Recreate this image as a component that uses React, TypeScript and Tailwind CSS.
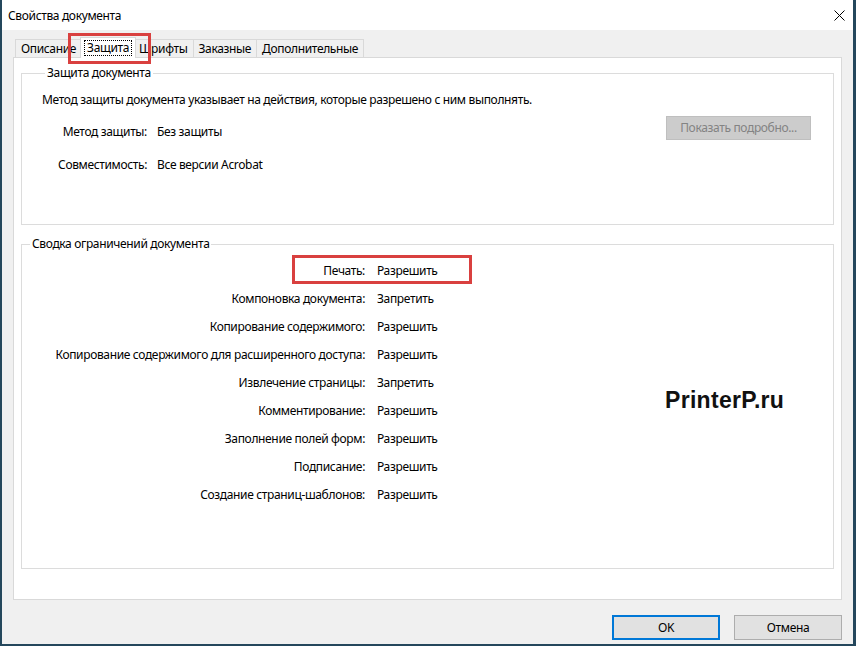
import * as React from "react";

const restrictions: [string, string][] = [
  ["Печать:", "Разрешить"],
  ["Компоновка документа:", "Запретить"],
  ["Копирование содержимого:", "Разрешить"],
  ["Копирование содержимого для расширенного доступа:", "Разрешить"],
  ["Извлечение страницы:", "Запретить"],
  ["Комментирование:", "Разрешить"],
  ["Заполнение полей форм:", "Разрешить"],
  ["Подписание:", "Разрешить"],
  ["Создание страниц-шаблонов:", "Разрешить"],
];

const tabs = ["Описание", "Защита", "Шрифты", "Заказные", "Дополнительные"];

function Tab({ label, active }: { label: string; active: boolean }) {
  if (active) {
    return (
      <div className="relative z-10 -mx-[2px] -mb-px flex h-[21px] items-center border border-b-0 border-[#d9d9d9] bg-white px-[3px]">
        <span className="border border-dotted border-black px-[2px] leading-[14px]">{label}</span>
      </div>
    );
  }
  return (
    <div className="-ml-px flex h-[18px] items-center border border-b-0 border-[#d9d9d9] bg-[#f0f0f0] px-[5px] first:ml-0">
      {label}
    </div>
  );
}

export default function App() {
  return (
    <div
      className="relative flex h-[646px] w-[856px] flex-col overflow-hidden border-b-2 border-l-2 border-r-[3px] border-[#24475c] bg-[#f0f0f0] text-[12px] tracking-[-0.35px] text-black"
      style={{ fontFamily: '"Noto Sans", "Segoe UI", sans-serif' }}
    >
      {/* title bar */}
      <div className="flex h-[30px] shrink-0 items-center justify-between bg-white pl-[6px] pr-[8px] pt-[1px]">
        <span>Свойства документа</span>
        <svg width="11" height="11" viewBox="0 0 11 11" className="text-black">
          <path d="M0.5 0.5 L10.5 10.5 M10.5 0.5 L0.5 10.5" stroke="currentColor" strokeWidth="1" />
        </svg>
      </div>

      {/* tabs */}
      <div className="flex h-[27px] items-end pl-[13px]">
        {tabs.map((t) => (
          <Tab key={t} label={t} active={t === "Защита"} />
        ))}
      </div>

      {/* tab panel */}
      <div className="mx-[11px] flex h-[543px] flex-col gap-[11px] border border-[#d9d9d9] bg-white px-[7px] pt-[7px]">
        <fieldset className="h-[160px] border border-[#dcdcdc] px-[20px]">
          <legend className="ml-[3px] px-[2px] leading-[16px]">Защита документа</legend>
          <p className="mt-[11px] leading-[16px]">
            Метод защиты документа указывает на действия, которые разрешено с ним выполнять.
          </p>
          <div className="mt-[8px] flex items-start justify-between">
            <div className="grid grid-cols-[105px_1fr] gap-x-[10px] gap-y-[17px] pt-[8px] leading-[16px]">
              <span className="text-right">Метод защиты:</span>
              <span>Без защиты</span>
              <span className="text-right">Совместимость:</span>
              <span>Все версии Acrobat</span>
            </div>
            <button className="mr-[2px] h-[24px] w-[145px] border border-[#bfbfbf] bg-[#cccccc] text-[#838383]">
              Показать подробно...
            </button>
          </div>
        </fieldset>

        <fieldset className="h-[333px] border border-[#dcdcdc]">
          <legend className="ml-[8px] px-[2px] leading-[16px]">Сводка ограничений документа</legend>
          <div className="mt-[11px] grid grid-cols-[343px_1fr] gap-x-[12px] gap-y-[12px] leading-[16px]">
            {restrictions.map(([k, v]) => (
              <React.Fragment key={k}>
                <span className="text-right">{k}</span>
                <span>{v}</span>
              </React.Fragment>
            ))}
          </div>
          <div
            className="absolute left-[663px] top-[383px] text-[23px] font-bold tracking-[0.3px] text-[#111]"
            style={{ fontFamily: '"Liberation Sans", Arial, sans-serif' }}
          >
            PrinterP.ru
          </div>
        </fieldset>
      </div>

      {/* footer */}
      <div className="flex flex-1 items-end justify-end gap-[14px] pb-[4px] pr-[11px]">
        <button className="h-[25px] w-[108px] border-2 border-[#0078d7] bg-[#e1e1e1]">OK</button>
        <button className="h-[25px] w-[108px] border border-[#adadad] bg-[#e1e1e1]">Отмена</button>
      </div>

      {/* highlight overlays */}
      <div className="pointer-events-none absolute left-[66px] top-[33px] h-[31px] w-[83px] border-[3px] border-[#d9403f]" />
      <div className="pointer-events-none absolute left-[290px] top-[255px] h-[29px] w-[180px] border-[3px] border-[#d9403f]" />
    </div>
  );
}
